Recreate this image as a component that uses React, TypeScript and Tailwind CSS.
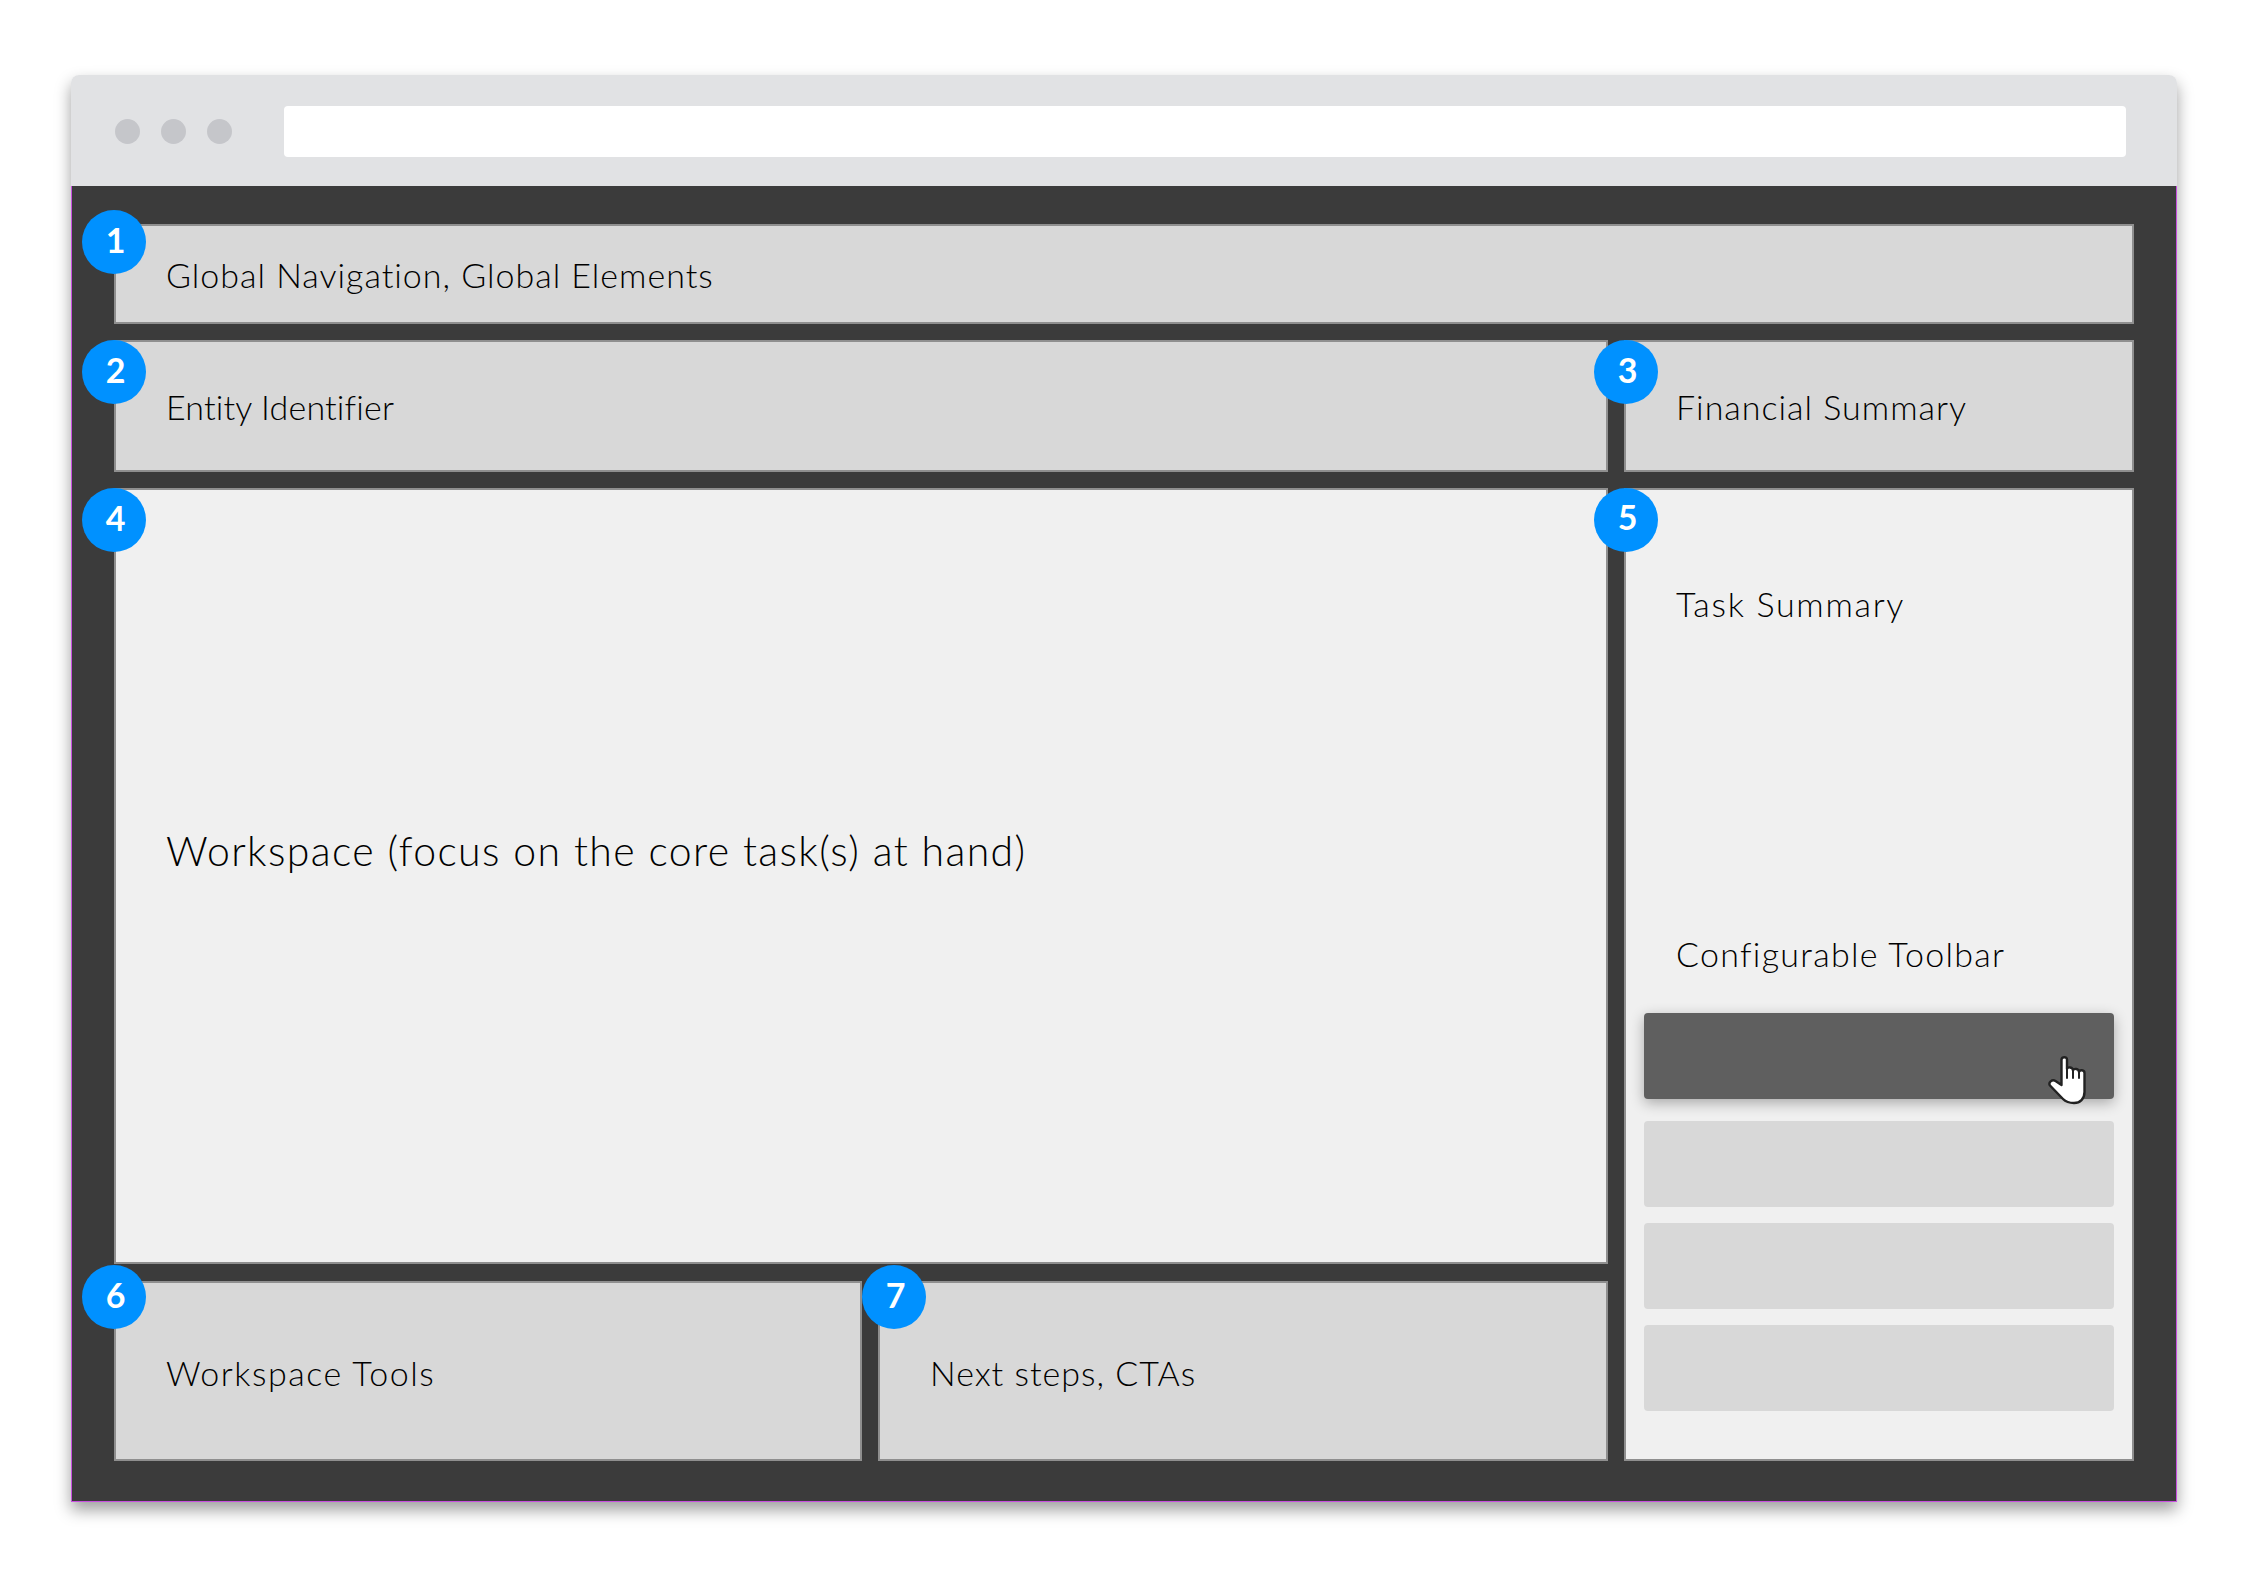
function Badge({ n, className }: { n: number; className: string }) {
  return (
    <span
      className={`absolute w-16 h-16 rounded-full bg-[#0091ff] text-white flex items-center justify-center font-['Lato',sans-serif] font-bold text-[34px] tracking-normal pb-[6px] pl-[3px] ${className}`}
    >
      {n}
    </span>
  );
}

function Panel({
  label,
  labelClass = "",
  className = "",
  children,
}: {
  label?: string;
  labelClass?: string;
  className?: string;
  children?: React.ReactNode;
}) {
  return (
    <div className={`relative border-2 border-[#8f8f8f] bg-[#d8d8d8] pl-[50px] flex items-center ${className}`}>
      {label && <span className={`text-[34px] font-light text-black [font-variant-ligatures:none] ${labelClass}`}>{label}</span>}
      {children}
    </div>
  );
}

function HandCursor() {
  return (
    <svg className="absolute left-[403px] top-[42px]" width="40" height="50" viewBox="0 0 40 50">
      <path
        d="M14.5 30 L8.5 26 C5 24 1 27.5 3 30.5 L16 44 C19 47 22 48 27 48 C33 48 37.5 44 37.5 37 V18 C37.5 14.5 32.5 14.5 32 17 C32 13.5 26.5 13 26 15.5 C26 12 20.5 11.5 20 14 V4.5 C20 1.5 15 1.5 14.5 4.5 Z"
        fill="#fff"
        stroke="#222"
        strokeWidth="2.4"
        strokeLinejoin="round"
      />
      <path d="M20 14 V23 M26 15.5 V23 M32 17 V23" fill="none" stroke="#222" strokeWidth="2" strokeLinecap="round" />
    </svg>
  );
}

export default function App() {
  return (
    <div className="w-[2258px] h-[1586px] bg-white pt-[75px] pl-[71px] font-['Lato',sans-serif]">
      <div className="w-[2106px] h-[1427px] rounded-t-[8px] flex flex-col shadow-[0_8px_16px_rgba(0,0,0,0.38)]">
        {/* browser chrome */}
        <div className="h-[111px] shrink-0 bg-[#e1e2e4] rounded-t-[8px] flex items-start pl-[44px] pr-[51px] pt-[31px]">
          <div className="flex gap-[21px] mt-[13px]">
            <span className="w-[25px] h-[25px] rounded-full bg-[#c5c6ca]" />
            <span className="w-[25px] h-[25px] rounded-full bg-[#c5c6ca]" />
            <span className="w-[25px] h-[25px] rounded-full bg-[#c5c6ca]" />
          </div>
          <div className="ml-[52px] flex-1 h-[51px] bg-white rounded-[4px]" />
        </div>

        {/* page body */}
        <div className="relative flex-1 bg-[#3b3b3b] border-x border-b border-[#c84fe0] pl-[42px] pr-[42px] pt-[38px] flex flex-col gap-4">
          <Panel label="Global Navigation, Global Elements" labelClass="tracking-[1px]" className="h-[100px] shrink-0">
            <Badge n={1} className="left-[-34px] top-[-16px]" />
          </Panel>

          <div className="flex gap-4 h-[132px] shrink-0">
            <Panel label="Entity Identifier" labelClass="tracking-[0.17px]" className="w-[1494px]">
              <Badge n={2} className="left-[-34px] top-[-2px]" />
            </Panel>
            <Panel label="Financial Summary" labelClass="tracking-[1px]" className="flex-1">
              <Badge n={3} className="left-[-32px] top-[-2px]" />
            </Panel>
          </div>

          <div className="flex gap-4 flex-1 mb-[40px]">
            <div className="w-[1494px] flex flex-col gap-[17px]">
              <Panel className="flex-1 bg-[#f0f0f0] pb-[50px]">
                <span className="text-[41px] font-light text-black tracking-[1.36px] [font-variant-ligatures:none]">Workspace (focus on the core task(s) at hand)</span>
                <Badge n={4} className="left-[-34px] top-[-2px]" />
              </Panel>
              <div className="flex gap-4 h-[180px]">
                <Panel label="Workspace Tools" labelClass="tracking-[1.5px]" className="w-[748px] pt-[2px]">
                  <Badge n={6} className="left-[-34px] top-[-18px]" />
                </Panel>
                <Panel label="Next steps, CTAs" labelClass="tracking-[1px]" className="flex-1 pt-[2px]">
                  <Badge n={7} className="left-[-18px] top-[-18px]" />
                </Panel>
              </div>
            </div>

            <div className="relative flex-1 border-2 border-[#8f8f8f] bg-[#f0f0f0] flex flex-col px-[18px] text-[34px] leading-[40px] font-light text-black [font-variant-ligatures:none]">
              <Badge n={5} className="left-[-32px] top-[-2px]" />
              <span className="mt-[94px] ml-[32px] tracking-[1.7px]">Task Summary</span>
              <span className="mt-[310px] ml-[32px] tracking-[1.28px]">Configurable Toolbar</span>
              <div className="relative mt-[39px] h-[86px] rounded-[4px] bg-[#5f5f5f] shadow-[0_4px_14px_rgba(0,0,0,0.3)]">
                <HandCursor />
              </div>
              <div className="mt-[22px] h-[86px] rounded-[4px] bg-[#d8d8d8]" />
              <div className="mt-4 h-[86px] rounded-[4px] bg-[#d8d8d8]" />
              <div className="mt-4 h-[86px] rounded-[4px] bg-[#d8d8d8]" />
            </div>
          </div>
        </div>
      </div>
    </div>
  );
}
